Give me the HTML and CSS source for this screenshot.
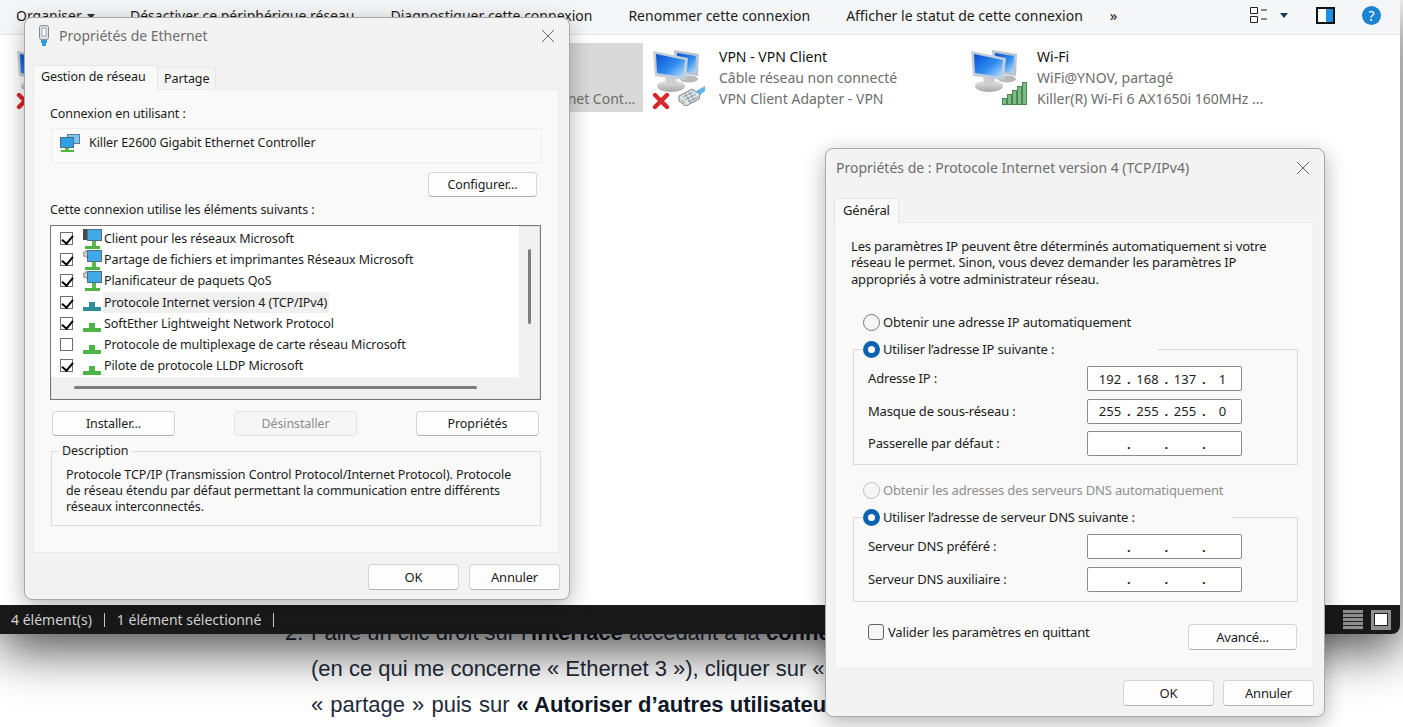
FILE: index.html
```html
<!DOCTYPE html>
<html>
<head>
	<title>Connexions réseau</title>
	<link rel="stylesheet" href="styles.css">
</head>
<body>
	<svg class="defs" width="0" height="0">
		<defs>
			<linearGradient id="screenBlue" x1="0" y1="0" x2="1" y2="1">
				<stop offset="0" stop-color="#0a4fd0"/>
				<stop offset=".55" stop-color="#2f8cf0"/>
				<stop offset="1" stop-color="#bfe2fb"/>
			</linearGradient>
			<linearGradient id="standGrey" x1="0" y1="0" x2="0" y2="1">
				<stop offset="0" stop-color="#ececec"/>
				<stop offset="1" stop-color="#a6a6a6"/>
			</linearGradient>
			<symbol id="net" viewBox="0 0 60 64">
				<ellipse cx="39" cy="33" rx="9" ry="3.5" fill="#b9b9b9"/>
				<path d="M24 4 49 8 48 30 26 27Z" fill="#b7c4d0"/>
				<path d="M27 7 46 10 45 27 28 25Z" fill="url(#screenBlue)"/>
				<ellipse cx="21" cy="40" rx="14" ry="6" fill="url(#standGrey)"/>
				<path d="M15 30H27L26 38H16Z" fill="#cfcfcf"/>
				<path d="M3 5 38 12 36 34 5 30Z" fill="#c3ced8"/>
				<path d="M6 8 35 14 33 31 7 27Z" fill="url(#screenBlue)"/>
			</symbol>
			<symbol id="redx" viewBox="0 0 18 18">
				<path d="M3 3 15 15M15 3 3 15" stroke="#d8262a" stroke-width="4.400" stroke-linecap="round"/>
			</symbol>
			<symbol id="plug" viewBox="0 0 28 20">
				<path d="M1 10 14 3 22 8 21 13 8 20 1 15Z" fill="#dbe3e8" stroke="#77858f"/>
				<path d="M5 11 15 6M7 14 18 8M10 16 20 11M7 8 13 17M11 6 17 15" stroke="#7d8a93" stroke-width=".8"/>
				<path d="M3 14 7 17" stroke="#c9b46a" stroke-width="1.500"/>
				<path d="M18 5 27 0V5L22 9Z" fill="#5fb6e6"/>
			</symbol>
			<symbol id="pc" viewBox="0 0 20 22">
				<rect x="5.500" y="1.500" width="14" height="11" fill="#3fa9e8" stroke="#4f6f80"/>
				<rect x="10" y="13" width="4" height="5" fill="#58bb4c"/>
				<rect x="3" y="18" width="15" height="3" fill="#4cb544"/>
			</symbol>
			<symbol id="client" viewBox="0 0 20 22">
				<rect x="1" y="1" width="5" height="11" fill="#4a4a4a"/>
				<use href="#pc" width="20" height="22"/>
			</symbol>
			<symbol id="gear" viewBox="0 0 20 22">
				<circle cx="4.500" cy="5" r="3" fill="#cfcfcf" stroke="#8c8c8c" stroke-width="1.500" stroke-dasharray="2 1"/>
				<use href="#pc" width="20" height="22"/>
			</symbol>
			<symbol id="twin" viewBox="0 0 20 18">
				<rect x="7.500" y=".5" width="12" height="9" fill="#7cc3ee" stroke="#5a7f95"/>
				<rect x=".5" y="3.500" width="13" height="10" fill="#2f9fe6" stroke="#4f6f80"/>
				<rect x="5" y="14" width="4" height="2" fill="#58bb4c"/>
				<rect x="1" y="16" width="13" height="2" fill="#4cb544"/>
			</symbol>
			<symbol id="proto" viewBox="0 0 20 22">
				<rect x="7" y="11" width="6" height="6" fill="currentColor"/>
				<rect x="1" y="16" width="18" height="4" fill="currentColor"/>
			</symbol>
		</defs>
	</svg>

	<ol class="article" start="2">
		<li><span class="num">2.</span>Faire un clic droit sur l’<b>interface</b> accédant à la <b>connexion</b><br>
			(en ce qui me concerne « Ethernet 3 »), cliquer sur « Propriétés »<br>
			<span class="wide">« partage » puis sur </span><b>« Autoriser d’autres utilisateurs du réseau »,</b></li>
	</ol>

	<div class="explorer">
		<div class="toolbar">
			<span class="tool tool-org">Organiser <i class="caret"></i></span>
			<span class="tool">Désactiver ce périphérique réseau</span>
			<span class="tool">Diagnostiquer cette connexion</span>
			<span class="tool">Renommer cette connexion</span>
			<span class="tool">Afficher le statut de cette connexion</span>
			<span class="more">»</span>
			<span class="tool-icons">
				<svg class="ic-view" width="18" height="16" viewBox="0 0 18 16">
					<path d="M.5.500H7.500V6.500H.5ZM.5 9.500H7.500V15.500H.5Z" fill="#fff" stroke="#222"/>
					<path d="M11 3H17M11 12H17" stroke="#222"/>
				</svg>
				<i class="caret caret-navy"></i>
				<span class="ic-pane"></span>
				<span class="ic-help">?</span>
			</span>
		</div>
		<div class="items">
			<div class="item">
				<svg class="item-icon" width="60" height="64">
					<use href="#net" width="60" height="64"/>
					<use href="#redx" x="2" y="46" width="18" height="18"/>
				</svg>
			</div>
			<div class="item">
				<svg class="item-icon" width="60" height="64">
					<use href="#net" width="60" height="64"/>
				</svg>
				<div class="item-text">
					<div class="item-name">Ethernet</div>
					<div>&nbsp;</div>
					<div>Killer E2600 Gigabit Ethernet Cont...</div>
				</div>
			</div>
			<div class="item">
				<svg class="item-icon" width="60" height="64">
					<use href="#net" width="60" height="64"/>
					<use href="#redx" x="2" y="46" width="18" height="18"/>
					<use href="#plug" x="28" y="40" width="28" height="20"/>
				</svg>
				<div class="item-text">
					<div class="item-name">VPN - VPN Client</div>
					<div>Câble réseau non connecté</div>
					<div>VPN Client Adapter - VPN</div>
				</div>
			</div>
			<div class="item">
				<svg class="item-icon" width="60" height="64">
					<use href="#net" width="60" height="64"/>
					<g fill="#7fbb85" stroke="#4a8a52">
						<rect x="34.500" y="52.500" width="4" height="6"/>
						<rect x="39.500" y="48.500" width="4" height="10"/>
						<rect x="44.500" y="44.500" width="4" height="14"/>
						<rect x="49.500" y="40.500" width="4" height="18"/>
						<rect x="54.500" y="36.500" width="4" height="22"/>
					</g>
				</svg>
				<div class="item-text">
					<div class="item-name">Wi-Fi</div>
					<div>WiFi@YNOV, partagé</div>
					<div>Killer(R) Wi-Fi 6 AX1650i 160MHz ...</div>
				</div>
			</div>
		</div>
		<div class="statusbar">
			<span class="status-cell">4 élément(s)</span>
			<span class="status-cell">1 élément sélectionné</span>
			<span class="status-views">
				<span class="view-list"></span>
				<span class="view-large"></span>
			</span>
		</div>
	</div>

	<div class="dialog dialog-eth">
		<div class="titlebar">
			<svg class="title-icon" width="12" height="22" viewBox="0 0 12 22">
				<rect x="1.500" y=".5" width="9" height="14" rx="2" fill="#dfe3e6" stroke="#7d8a94"/>
				<rect x="4" y="3" width="4" height="8" fill="#fff" stroke="#9aa5ad"/>
				<path d="M3 15H9V18H8V21H4V18H3Z" fill="#2f9bd8"/>
			</svg>
			<span class="title-text">Propriétés de Ethernet</span>
			<svg class="close" width="14" height="14" viewBox="0 0 14 14"><path d="M1 1 13 13M13 1 1 13" stroke="#666"/></svg>
		</div>
		<div class="tabs">
			<span class="tab tab-active">Gestion de réseau</span>
			<span class="tab">Partage</span>
		</div>
		<div class="panel">
			<div class="line">Connexion en utilisant :</div>
			<div class="device">
				<svg width="20" height="18" class="device-icon"><use href="#twin" width="20" height="18"/></svg>
				Killer E2600 Gigabit Ethernet Controller
			</div>
			<div class="configure"><button class="btn btn-config">Configurer...</button></div>
			<div class="line">Cette connexion utilise les éléments suivants :</div>

			<div class="list">
				<ul class="rows">
					<li><i class="cb on"></i><svg class="row-icon" width="20" height="22"><use href="#client" width="20" height="22"/></svg><span>Client pour les réseaux Microsoft</span></li>
					<li><i class="cb on"></i><svg class="row-icon" width="20" height="22"><use href="#gear" width="20" height="22"/></svg><span>Partage de fichiers et imprimantes Réseaux Microsoft</span></li>
					<li><i class="cb on"></i><svg class="row-icon" width="20" height="22"><use href="#gear" width="20" height="22"/></svg><span>Planificateur de paquets QoS</span></li>
					<li><i class="cb on"></i><svg class="row-icon proto-sel" width="20" height="22"><use href="#proto" width="20" height="22"/></svg><span class="row-sel">Protocole Internet version 4 (TCP/IPv4)</span></li>
					<li><i class="cb on"></i><svg class="row-icon proto" width="20" height="22"><use href="#proto" width="20" height="22"/></svg><span>SoftEther Lightweight Network Protocol</span></li>
					<li><i class="cb"></i><svg class="row-icon proto" width="20" height="22"><use href="#proto" width="20" height="22"/></svg><span>Protocole de multiplexage de carte réseau Microsoft</span></li>
					<li><i class="cb on"></i><svg class="row-icon proto" width="20" height="22"><use href="#proto" width="20" height="22"/></svg><span>Pilote de protocole LLDP Microsoft</span></li>
				</ul>
				<div class="vscroll"><i></i></div>
				<div class="hscroll"><i></i></div>
			</div>

			<div class="list-btns">
				<button class="btn btn-wide">Installer...</button>
				<button class="btn btn-wide" disabled>Désinstaller</button>
				<button class="btn btn-wide">Propriétés</button>
			</div>

			<fieldset class="desc">
				<legend>Description</legend>
				<p>Protocole TCP/IP (Transmission Control Protocol/Internet Protocol). Protocole<br>
				de réseau étendu par défaut permettant la communication entre différents<br>
				réseaux interconnectés.</p>
			</fieldset>
		</div>
		<div class="footer">
			<button class="btn btn-foot">OK</button>
			<button class="btn btn-foot">Annuler</button>
		</div>
	</div>

	<div class="dialog dialog-ip">
		<div class="titlebar">
			<span class="title-text">Propriétés de : Protocole Internet version 4 (TCP/IPv4)</span>
			<svg class="close" width="14" height="14" viewBox="0 0 14 14"><path d="M1 1 13 13M13 1 1 13" stroke="#666"/></svg>
		</div>
		<div class="tabs">
			<span class="tab tab-active tab-gen">Général</span>
		</div>
		<div class="panel">
			<p class="intro">Les paramètres IP peuvent être déterminés automatiquement si votre<br>
			réseau le permet. Sinon, vous devez demander les paramètres IP<br>
			appropriés à votre administrateur réseau.</p>

			<div class="radio-line first"><i class="radio"></i>Obtenir une adresse IP automatiquement</div>
			<fieldset class="group">
				<legend class="group-leg"><i class="radio on"></i>Utiliser l’adresse IP suivante :</legend>
				<div class="ip-row">
					<span class="ip-label">Adresse IP :</span>
					<span class="ip"><b>192</b><i>.</i><b>168</b><i>.</i><b>137</b><i>.</i><b>1</b></span>
				</div>
				<div class="ip-row">
					<span class="ip-label">Masque de sous-réseau :</span>
					<span class="ip"><b>255</b><i>.</i><b>255</b><i>.</i><b>255</b><i>.</i><b>0</b></span>
				</div>
				<div class="ip-row">
					<span class="ip-label">Passerelle par défaut :</span>
					<span class="ip"><b></b><i>.</i><b></b><i>.</i><b></b><i>.</i><b></b></span>
				</div>
			</fieldset>

			<div class="radio-line second disabled"><i class="radio"></i>Obtenir les adresses des serveurs DNS automatiquement</div>
			<fieldset class="group group-dns">
				<legend class="group-leg leg-dns"><i class="radio on"></i>Utiliser l’adresse de serveur DNS suivante :</legend>
				<div class="ip-row">
					<span class="ip-label">Serveur DNS préféré :</span>
					<span class="ip"><b></b><i>.</i><b></b><i>.</i><b></b><i>.</i><b></b></span>
				</div>
				<div class="ip-row">
					<span class="ip-label">Serveur DNS auxiliaire :</span>
					<span class="ip"><b></b><i>.</i><b></b><i>.</i><b></b><i>.</i><b></b></span>
				</div>
			</fieldset>

			<div class="validate">
				<span class="validate-check"><i class="cb-round"></i>Valider les paramètres en quittant</span>
				<button class="btn btn-adv">Avancé...</button>
			</div>
		</div>
		<div class="footer">
			<button class="btn btn-foot">OK</button>
			<button class="btn btn-foot">Annuler</button>
		</div>
	</div>
</body>
</html>
```

FILE: styles.css
```css
*{
	margin: 0;
	padding: 0;
	box-sizing: border-box;
}
html, body{
	height: 727px;
	overflow: hidden;
}
body{
	position: relative;
	background: #fff;
	font-family: "Noto Sans", "Open Sans", sans-serif;
}
.defs{
	position: absolute;
}

/* page behind the windows */
.article{
	list-style: none;
	padding: 615px 0 0 311px;
	font-family: "Liberation Sans", Arial, sans-serif;
	font-size: 22px;
	line-height: 36px;
	color: #222b3a;
	white-space: nowrap;
}
.article b{
	color: #101828;
}
.num{
	display: inline-block;
	width: 26px;
	margin-left: -26px;
}
.wide{
	word-spacing: 1px;
}

/* explorer window */
.explorer{
	position: absolute;
	left: 0;
	top: 0;
	width: 1400px;
	height: 634px;
	display: flex;
	flex-direction: column;
	background: #fff;
	border-bottom-right-radius: 8px;
	box-shadow: 0 16px 50px rgba(0,0,0,.7);
}
.toolbar{
	height: 35px;
	display: flex;
	align-items: center;
	gap: 36px;
	padding: 0 19px 4px 16px;
	background: #f5f6f7;
	border-bottom: 1px solid #e3e5e7;
	font-size: 14px;
	color: #1b1b1b;
	white-space: nowrap;
}
.tool-org{
	width: 78px;
}
.caret{
	display: inline-block;
	width: 0;
	height: 0;
	margin-left: 2px;
	vertical-align: middle;
	border: 4px solid transparent;
	border-top: 5px solid #333;
	border-bottom: 0;
}
.caret-navy{
	border-top-color: #1d3557;
}
.more{
	margin-left: -9px;
	font-size: 15px;
}
.tool-icons{
	display: flex;
	align-items: center;
	margin-left: auto;
}
.ic-view{
	margin-right: 10px;
}
.ic-pane{
	width: 19px;
	height: 17px;
	margin-left: 28px;
	border: 2px solid #111;
	background: linear-gradient(90deg, #fff 50%, #1e8fe0 50%);
}
.ic-help{
	width: 19px;
	height: 19px;
	margin-left: 27px;
	border-radius: 50%;
	background: #1a84d0;
	color: #fff;
	font-size: 14px;
	line-height: 19px;
	text-align: center;
}
.items{
	flex: 1;
	display: grid;
	grid-template-columns: repeat(4, 318px);
	align-content: start;
	padding: 8px 0 0 14px;
}
.item{
	height: 69px;
	display: flex;
	font-size: 14px;
	color: #6d6d6d;
	white-space: nowrap;
}
.item:nth-child(2){
	background: #d9d9d9;
	margin-right: 7px;
}
.item-icon{
	flex: none;
	margin: 3px 9px 0 0;
}
.item-text{
	padding-top: 3px;
	line-height: 21px;
}
.item-name{
	color: #111;
}
.statusbar{
	height: 29px;
	display: flex;
	align-items: center;
	padding-left: 11px;
	background: #191919;
	border-bottom-right-radius: 8px;
	font-size: 14px;
	color: #d6d6d6;
}
.status-cell{
	padding-right: 12px;
	margin-right: 12px;
	border-right: 1px solid #ccc;
	line-height: 14px;
}
.status-views{
	display: flex;
	gap: 8px;
	margin-left: auto;
	margin-right: 9px;
}
.view-list{
	width: 20px;
	height: 20px;
	background: repeating-linear-gradient(#8e8e8e 0 3px, #222 3px 4px);
}
.view-large{
	width: 20px;
	height: 20px;
	border: 3px solid #8e8e8e;
	border-bottom-width: 4px;
	background: #fff;
	box-shadow: inset 0 0 0 1px #222;
}

/* dialogs */
.dialog{
	position: absolute;
	display: flex;
	flex-direction: column;
	background: #f3f3f3;
	border: 1px solid #a8a8a8;
	border-radius: 8px;
	box-shadow: 0 6px 22px rgba(0,0,0,.3);
	line-height: 16px;
	color: #1c1c1c;
	white-space: nowrap;
}
.dialog-eth{
	left: 24px;
	top: 17px;
	width: 546px;
	height: 583px;
	padding: 0 10px 0 8px;
	font-size: 12.500px;
	letter-spacing: -.09px;
}
.dialog-ip{
	left: 825px;
	top: 148px;
	width: 500px;
	height: 569px;
	padding: 0 10px 0 8px;
	font-size: 13px;
	letter-spacing: -.17px;
}
.titlebar{
	flex: none;
	height: 46px;
	display: flex;
	align-items: center;
	padding-bottom: 10px;
	margin: 0 -1px 0 0;
}
.dialog-ip .titlebar{
	height: 48px;
	padding-left: 2px;
}
.title-icon{
	margin: 0 9px 0 5px;
}
.title-text{
	font-size: 14px;
	letter-spacing: 0;
	color: #6e6e6e;
}
.close{
	margin-left: auto;
	margin-right: 5px;
}
.tabs{
	flex: none;
	height: 25px;
	display: flex;
	align-items: flex-end;
	position: relative;
	z-index: 1;
}
.tab{
	height: 22px;
	padding: 3px 6px 0;
	background: #f5f5f5;
	border: 1px solid #e6e6e6;
	border-bottom: 0;
	border-left: 0;
}
.tab-active{
	width: 125px;
	height: 25px;
	padding: 3px 0 0 7px;
	background: #f9f9f9;
	border-left: 1px solid #e6e6e6;
	margin-bottom: -1px;
}
.tab-gen{
	width: 65px;
	padding-left: 8px;
}
.panel{
	flex: 1;
	background: #f9f9f9;
	border: 1px solid #e9e9e9;
	padding: 16px 16px 0 16px;
}
.dialog-ip .panel{
	padding: 15px 15px 0 16px;
}
.footer{
	flex: none;
	height: 47px;
	display: flex;
	justify-content: flex-end;
	gap: 9px;
	padding-top: 11px;
}
.dialog-eth .footer{
	height: 46px;
	gap: 10px;
	margin-right: -1px;
}
.btn{
	font: inherit;
	letter-spacing: inherit;
	color: #1c1c1c;
	background: #fdfdfd;
	border: 1px solid #d5d5d5;
	border-bottom-color: #b0b0b0;
	border-radius: 4px;
}
.btn:disabled{
	color: #8c8c8c;
	background: #f6f6f6;
	border-color: #e3e3e3;
}
.btn-foot{
	width: 91px;
	height: 26px;
	font-size: 13px;
	letter-spacing: -.22px;
}

/* ethernet dialog */
.device{
	height: 35px;
	margin: 6px 0 9px 1px;
	display: flex;
	align-items: center;
	gap: 9px;
	padding: 0 0 6px 8px;
	background: #fafafa;
	border: 1px solid #ededed;
}
.device-icon{
	flex: none;
}
.configure{
	display: flex;
	justify-content: flex-end;
	margin: 0 5px 5px 0;
}
.btn-config{
	width: 109px;
	height: 25px;
}
.list{
	position: relative;
	width: 491px;
	height: 175px;
	margin-top: 7px;
	background: #f0f0f0;
	border: 1px solid #777;
	box-shadow: inset 0 0 0 1px #e4e4e4;
}
.rows{
	list-style: none;
	width: 468px;
	height: 151px;
	padding-top: 2px;
	background: #fff;
}
.rows li{
	height: 21.200px;
	display: flex;
	align-items: center;
	padding-left: 9px;
}
.row-icon{
	flex: none;
	margin: 0 1px 0 9px;
}
.rows span{
	padding: 0 2px 0 1px;
	line-height: 21px;
}
.rows .row-sel{
	background: #f0f0f0;
}
.proto{
	color: #4db548;
}
.proto-sel{
	color: #2c8f96;
}
.cb{
	flex: none;
	position: relative;
	width: 13px;
	height: 13px;
	background: #fff;
	border: 1px solid #6e6e6e;
}
.cb.on::after{
	content: "";
	position: absolute;
	left: 3px;
	top: 0;
	width: 5px;
	height: 9px;
	border: solid #000;
	border-width: 0 2px 2px 0;
	transform: rotate(40deg);
}
.vscroll i{
	position: absolute;
	left: 477px;
	top: 23px;
	width: 3px;
	height: 75px;
	border-radius: 2px;
	background: #7d7d7d;
}
.hscroll i{
	position: absolute;
	left: 23px;
	top: 160px;
	width: 403px;
	height: 3px;
	border-radius: 2px;
	background: #7d7d7d;
}
.list-btns{
	display: flex;
	justify-content: space-between;
	width: 487px;
	margin: 11px 0 7px 2px;
}
.btn-wide{
	width: 123px;
	height: 25px;
}
.desc{
	width: 490px;
	height: 83px;
	margin-left: 1px;
	padding: 8px 8px 0 14px;
	border: 1px solid #dcdcdc;
}
.desc legend{
	margin-left: -8px;
	padding: 0 4px;
	line-height: 16px;
}
.desc p{
	line-height: 16.200px;
}

/* ipv4 dialog */
.intro{
	line-height: 16.400px;
}
.radio-line{
	display: flex;
	align-items: center;
	height: 18px;
	padding-left: 12px;
}
.radio-line.first{
	margin-top: 26px;
}
.radio-line.second{
	margin-top: 16px;
}
.disabled{
	color: #8f8f8f;
}
.radio{
	flex: none;
	position: relative;
	width: 17px;
	height: 17px;
	margin-right: 3px;
	background: #f6f6f6;
	border: 1px solid #777;
	border-radius: 50%;
}
.disabled .radio{
	border-color: #bdbdbd;
}
.radio.on{
	background: #fff;
	border: 5px solid #0a62b5;
}
.group{
	margin: 9px 0 0 2px;
	width: 445px;
	padding: 8px 0 8px 14px;
	border: 1px solid #dcdcdc;
}
.group-dns{
	padding-bottom: 9px;
}
.group-leg{
	display: flex;
	align-items: center;
	width: 294px;
	height: 18px;
	margin-left: -5px;
}
.leg-dns{
	width: 369px;
}
.ip-row{
	display: flex;
	align-items: center;
	height: 25px;
	margin-bottom: 7.500px;
}
.ip-row:last-child{
	margin-bottom: 0;
}
.ip-label{
	width: 219px;
	padding-bottom: 1px;
}
.ip{
	width: 155px;
	height: 25px;
	display: flex;
	align-items: center;
	padding-left: 7px;
	background: #fff;
	border: 1px solid #8a8a8a;
	border-radius: 2px;
	font-size: 13px;
	letter-spacing: 0;
}
.ip b{
	width: 30px;
	font-weight: normal;
	text-align: center;
}
.ip i{
	width: 7.500px;
	font-style: normal;
	font-weight: bold;
	text-align: center;
}
.validate{
	display: flex;
	align-items: flex-start;
	justify-content: space-between;
	width: 445px;
	margin: 22px 0 0 2px;
	padding: 0 1px 0 15px;
}
.validate-check{
	display: flex;
	align-items: center;
	height: 16px;
}
.cb-round{
	width: 16px;
	height: 16px;
	margin-right: 4px;
	background: #f6f6f6;
	border: 1px solid #666;
	border-radius: 3px;
}
.btn-adv{
	width: 109px;
	height: 26px;
	font-size: 13px;
}
```
